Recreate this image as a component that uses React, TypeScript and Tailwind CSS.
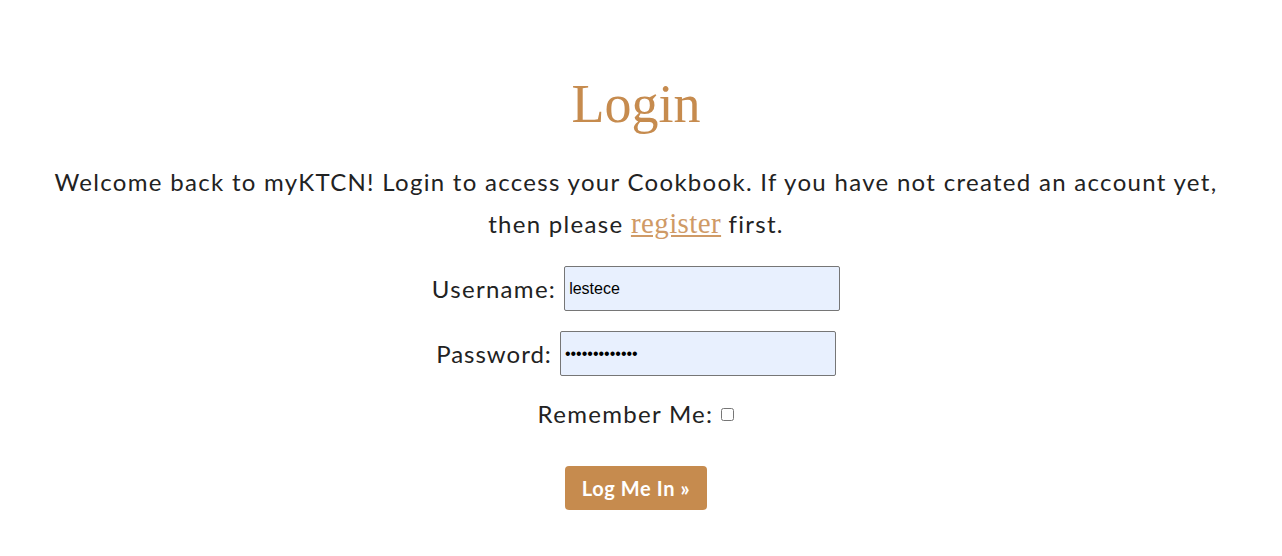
import React from "react";

const sans = "font-['Lato','Noto_Sans',sans-serif]";

export default function App() {
  return (
    <div className={`min-h-[556px] bg-white text-[#222] ${sans}`}>
      <main className="flex flex-col items-center pt-[74px] pr-[10px]">
        <h1 className="font-['Liberation_Serif',serif] text-[54px] leading-[60px] text-[#c68b4e]">
          Login
        </h1>
        <p className="mt-[27px] text-center text-[24px] leading-[42px] tracking-[1.3px]">
          Welcome back to myKTCN! Login to access your Cookbook. If you have not created an account yet,
          <br />
          then please{" "}
          <a href="#" className="font-['Liberation_Serif',serif] text-[29px] leading-[30px] tracking-[0.4px] text-[#cf9a66] underline">
            register
          </a>{" "}
          first.
        </p>

        <form className="mt-[21px] flex flex-col items-center">
          <div className="flex items-center gap-[8px] text-[24px] tracking-[1.3px]">
            <label htmlFor="username">Username:</label>
            <input
              id="username"
              defaultValue="lestece"
              className="h-[45px] w-[276px] rounded-[2px] border border-[#767676] bg-[#e8f0fe] px-[4px] font-['Liberation_Sans',sans-serif] text-[16px] tracking-normal text-black"
            />
          </div>
          <div className="mt-[20px] flex items-center gap-[8px] text-[24px] tracking-[1px]">
            <label htmlFor="password">Password:</label>
            <input
              id="password"
              type="password"
              defaultValue="lesteceeeeeee"
              className="h-[45px] w-[276px] rounded-[2px] border border-[#767676] bg-[#e8f0fe] px-[4px] font-['Liberation_Sans',sans-serif] text-[16px] tracking-normal text-black"
            />
          </div>
          <div className="mt-[20px] flex items-center gap-[8px] text-[24px] tracking-[1.3px]">
            <label htmlFor="remember">Remember Me:</label>
            <input id="remember" type="checkbox" className="h-[13px] w-[13px]" />
          </div>
          <button
            type="submit"
            className="mt-[34px] h-[44px] w-[142px] rounded-[4px] bg-[#c68b4e] text-[20px] font-bold tracking-[0.6px] text-white"
          >
            Log Me In »
          </button>
        </form>
      </main>
    </div>
  );
}
